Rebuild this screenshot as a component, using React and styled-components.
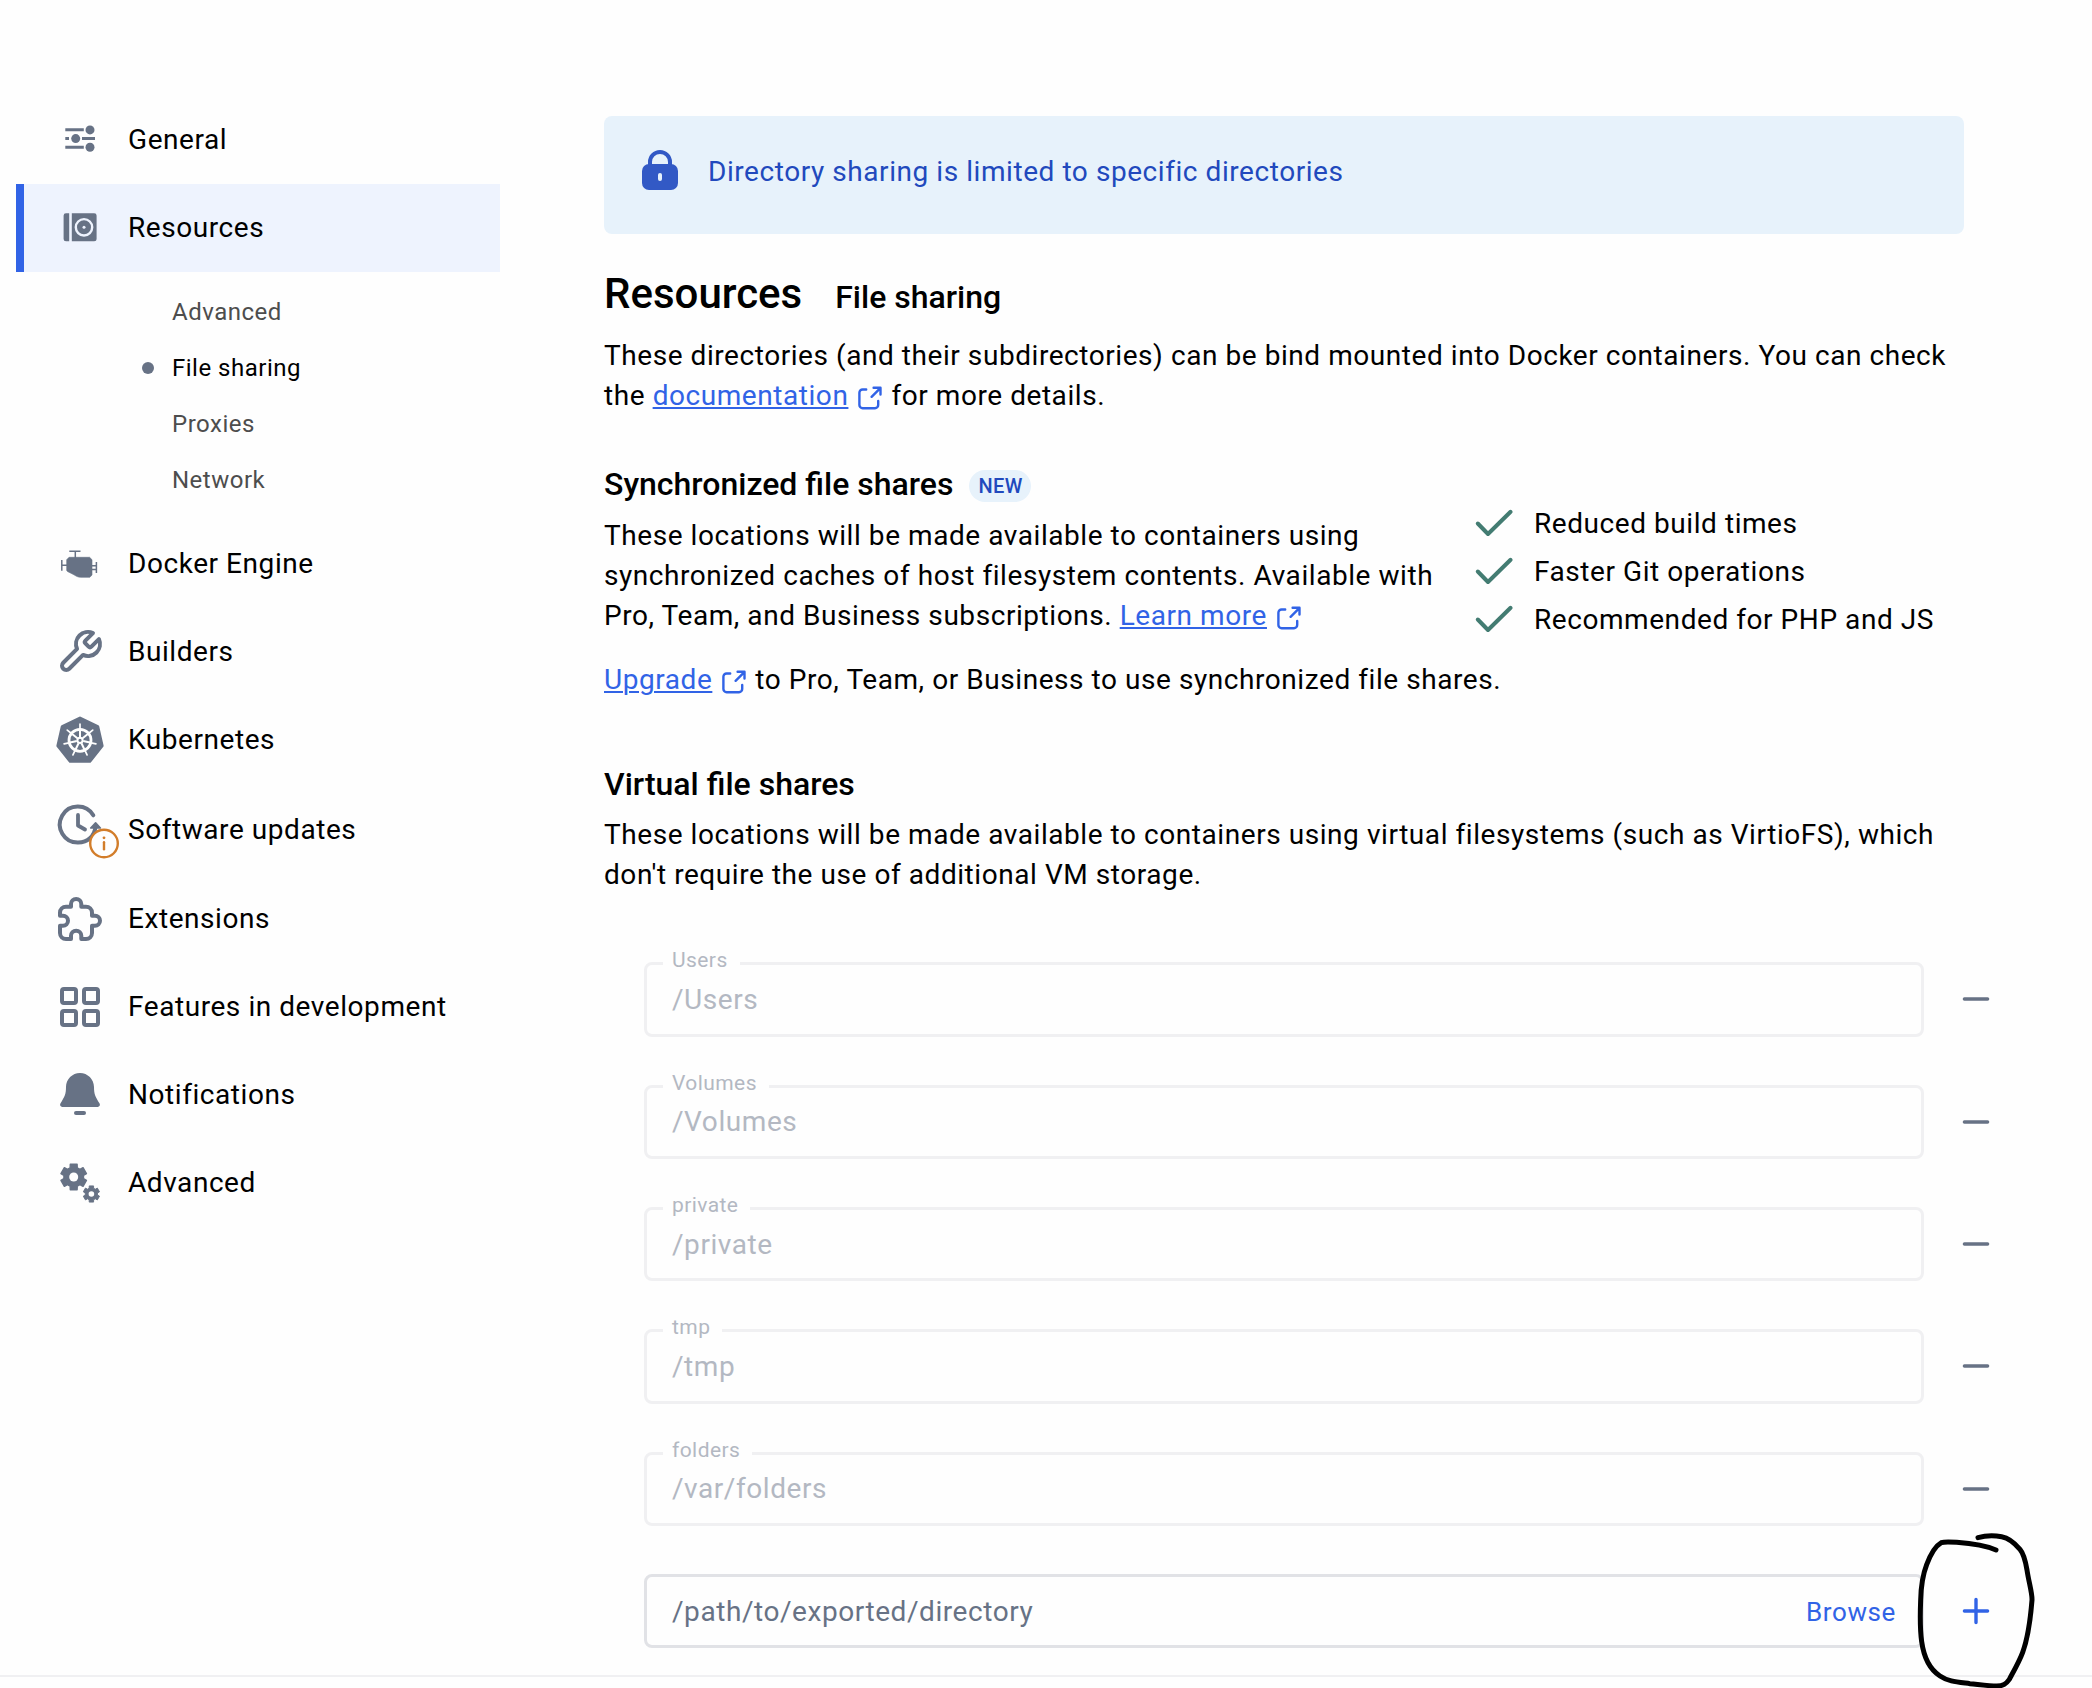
import React from "react";
import styled, { createGlobalStyle, css } from "styled-components";

const GREY = "#677285";
const BLUE = "#3163e6";
const ORANGE = "#d27d2a";
const GREEN = "#437c72";

const GlobalStyle = createGlobalStyle`
  * { box-sizing: border-box; }
  body {
    margin: 0;
    background: #fefefe;
    color: #000;
    font-family: Roboto, "Liberation Sans", sans-serif;
    font-size: 28px;
    line-height: 40px;
    letter-spacing: 0.56px;
  }
`;

const Page = styled.div`
  position: relative;
  width: 2092px;
  height: 1688px;
  overflow: hidden;
  display: flex;
  flex-direction: column;
`;

const Body = styled.div`
  display: flex;
  height: 1675px;
`;

const Footer = styled.footer`
  flex: none;
  height: 13px;
  border-top: 2px solid #f0f0f2;
`;

/* ---------- sidebar ---------- */

const Sidebar = styled.nav`
  width: 604px;
  flex: none;
  padding: 96px 104px 0 16px;
`;

const NavItem = styled.a`
  display: flex;
  align-items: center;
  gap: 24px;
  height: ${(p) => p.$height || 88}px;
  padding-left: 32px;
  border-left: 8px solid ${(p) => (p.$active ? BLUE : "transparent")};
  background: ${(p) => (p.$active ? "#eef3fe" : "transparent")};
  white-space: nowrap;
`;

const NavIcon = styled.svg`
  width: 48px;
  height: 48px;
  flex: none;
  overflow: visible;
  color: ${GREY};
`;

const SubList = styled.div`
  padding: 12px 0;
`;

const SubItem = styled.a`
  display: flex;
  align-items: center;
  height: 56px;
  padding-left: 126px;
  gap: 18px;
  font-size: 24px;
  letter-spacing: 0.5px;
  color: ${(p) => (p.$active ? "#000" : "#4d4d4d")};

  &::before {
    content: "";
    width: 12px;
    height: 12px;
    border-radius: 50%;
    background: ${(p) => (p.$active ? GREY : "transparent")};
  }
`;

/* ---------- content ---------- */

const Main = styled.main`
  width: 1488px;
  padding-top: 116px;
`;

const Alert = styled.div`
  display: flex;
  gap: 24px;
  width: 1360px;
  height: 118px;
  padding: 31px 32px;
  border-radius: 8px;
  background: #e7f2fb;
  color: #2149bd;
`;

const LockIcon = styled.svg`
  width: 48px;
  height: 48px;
`;

const AlertText = styled.div`
  padding-top: 5px;
`;

const TitleRow = styled.header`
  display: flex;
  align-items: baseline;
  gap: 33px;
  margin: 32px 0 14px;
  height: 56px;
`;

const Title = styled.h1`
  margin: 0;
  font-size: 42px;
  line-height: 56px;
  font-weight: 500;
  letter-spacing: 0;
`;

const Subtitle = styled.h2`
  margin: 0;
  font-size: 32px;
  line-height: 40px;
  font-weight: 500;
  letter-spacing: 0;
`;

const HeadingRow = styled.div`
  display: flex;
  align-items: center;
  gap: 16px;
  height: 40px;
  margin-bottom: ${(p) => p.$after}px;
`;

const Badge = styled.span`
  display: flex;
  align-items: center;
  height: 32px;
  margin-top: 4px;
  padding: 0 8px 0 9px;
  border-radius: 16px;
  background: #e7f2fb;
  color: #2149bd;
  font-size: 20px;
  font-weight: 500;
  letter-spacing: 0.4px;
`;

const Paragraph = styled.p`
  margin: 0 0 ${(p) => p.$after || 0}px;
  white-space: nowrap;
`;

const Link = styled.a`
  color: ${BLUE};
  text-decoration: underline;
  text-decoration-thickness: 2px;
  text-underline-offset: 2px;
`;

const ExternalSvg = styled.svg`
  width: 28px;
  height: 28px;
  margin: 0 7px 0 8px;
  vertical-align: -7px;
  color: ${BLUE};
`;

const SyncSection = styled.section`
  display: flex;
  width: 1360px;
  height: 172px;
  margin-bottom: 24px;
`;

const SyncText = styled.div`
  width: 866px;
`;

const Benefits = styled.ul`
  margin: 36px 0 0;
  padding: 0;
  list-style: none;
`;

const Benefit = styled.li`
  display: flex;
  align-items: center;
  gap: 16px;
  height: 48px;
  white-space: nowrap;
`;

const CheckSvg = styled.svg`
  width: 48px;
  height: 48px;
  flex: none;
`;

const ShareList = styled.div`
  display: flex;
  flex-direction: column;
  gap: 48px;
  padding-left: 40px;
`;

const ShareRow = styled.div`
  display: flex;
  align-items: center;
  gap: 28px;
  height: 74.33px;
`;

const Field = styled.div`
  position: relative;
  display: flex;
  align-items: center;
  justify-content: space-between;
  width: 1280px;
  height: 100%;
  padding: 1px 25px 0;
  border-radius: 8px;
  ${(p) =>
    p.$disabled
      ? css`
          border: 3px solid #f0f0f2;
          color: #b3b8c2;
        `
      : css`
          border: 3px solid #e1e2e6;
          color: ${GREY};
        `}
`;

const FieldLabel = styled.span`
  position: absolute;
  top: -21px;
  left: 16px;
  padding: 0 12px 0 9px;
  background: #fefefe;
  font-size: 21px;
  line-height: 32px;
  letter-spacing: 0.42px;
`;

const Browse = styled.button`
  padding: 0;
  border: 0;
  background: none;
  color: ${BLUE};
  font: inherit;
  font-size: 26px;
  letter-spacing: 0.6px;
`;

const RowButton = styled.button`
  display: flex;
  padding: 0;
  border: 0;
  background: none;
  color: ${(p) => (p.$primary ? BLUE : GREY)};
`;

const RowIcon = styled.svg`
  width: 48px;
  height: 48px;
`;

const Scribble = styled.svg`
  position: absolute;
  left: 1900px;
  top: 1520px;
  width: 160px;
  height: 168px;
  pointer-events: none;
`;

/* ---------- icons ---------- */

const polar = (cx, cy, r, deg) => {
  const a = (deg * Math.PI) / 180;
  return [cx + r * Math.sin(a), cy - r * Math.cos(a)];
};

const gearPoints = (cx, cy, outer, inner) => {
  const pts = [];
  for (let i = 0; i < 6; i++) {
    const a = i * 60;
    pts.push(polar(cx, cy, inner, a - 21));
    pts.push(polar(cx, cy, outer, a - 15));
    pts.push(polar(cx, cy, outer, a + 15));
    pts.push(polar(cx, cy, inner, a + 21));
  }
  return pts.map((p) => p.map((n) => n.toFixed(2)).join(",")).join(" ");
};

const SPOKES = [0, 1, 2, 3, 4, 5, 6].map((i) => (i * 360) / 7);
const HEPTAGON = SPOKES.map((a) => polar(24, 24.8, 22.7, a).join(",")).join(" ");

const icons = {
  general: (
    <g fill="currentColor" stroke="currentColor">
      <path d="M9.3 13.7H27.8M9.3 22.6H13M26 22.6H39M9.3 31.3H27.8" strokeWidth="3" />
      <g stroke="none">
        <circle cx="34" cy="13.9" r="4.5" />
        <circle cx="19.7" cy="22.6" r="4.5" />
        <circle cx="34" cy="31.3" r="4.5" />
      </g>
    </g>
  ),
  resources: (
    <>
      <path d="M10 9.3H13.2V37.3H10A2.4 2.4 0 0 1 7.6 34.9V11.7A2.4 2.4 0 0 1 10 9.3Z" fill="currentColor" />
      <path d="M15.8 9.3H38.2A2.4 2.4 0 0 1 40.6 11.7V34.9A2.4 2.4 0 0 1 38.2 37.3H15.8Z" fill="currentColor" />
      <circle cx="28" cy="23.3" r="8.2" fill="none" stroke="#eef3fe" strokeWidth="2.4" />
      <circle cx="28" cy="23.3" r="1.5" fill="#eef3fe" />
    </>
  ),
  engine: (
    <>
      <path
        d="M13 17.3H33.6L36 19.7V35L33.8 37.3H24.5C22 37.3 20 36 18 34.8L11.5 31.5L10.7 30.5V19.7Z"
        fill="currentColor"
        stroke="currentColor"
        strokeWidth="0.6"
        strokeLinejoin="round"
      />
      <path
        d="M13.3 11.2H24.5M19.3 11V18M5.8 20V30.8M5.8 25.2H11M40.4 22V33M36 25.8H40.4M36 29.6H40.4"
        fill="none"
        stroke="currentColor"
        strokeWidth="1.5"
      />
    </>
  ),
  builders: (
    <g transform="scale(2)">
      <path
        d="M14.7 6.3a1 1 0 0 0 0 1.4l1.6 1.6a1 1 0 0 0 1.4 0l3.77-3.77a6 6 0 0 1-7.94 7.94l-6.91 6.91a2.12 2.12 0 0 1-3-3l6.91-6.91a6 6 0 0 1 7.94-7.94l-3.76 3.76z"
        fill="none"
        stroke="currentColor"
        strokeWidth="2"
        strokeLinecap="round"
        strokeLinejoin="round"
      />
    </g>
  ),
  kubernetes: (
    <>
      <polygon points={HEPTAGON} fill="currentColor" stroke="currentColor" strokeWidth="3" strokeLinejoin="round" />
      <g stroke="#fefefe" fill="none">
        <circle cx="24" cy="24.3" r="11" strokeWidth="2.8" />
        {SPOKES.map((a) => (
          <g key={a} transform={`rotate(${a} 24 24.3)`}>
            <path d="M24 21V13" strokeWidth="2" />
            <path d="M24 13V8" strokeWidth="1.7" strokeLinecap="round" />
          </g>
        ))}
        <circle cx="24" cy="24.3" r="2.6" strokeWidth="2" />
      </g>
    </>
  ),
  updates: (
    <>
      <path
        d="M37.3 9.8A18 18 0 1 0 22 37C32 37 38.5 30.5 39.6 21"
        fill="none"
        stroke="currentColor"
        strokeWidth="4"
        strokeLinecap="round"
      />
      <path d="M34.7 22.5L39.6 17.3L44.4 22.5Z" fill="currentColor" stroke="currentColor" strokeWidth="1.6" strokeLinejoin="round" />
      <path d="M22 9.5V20L29 24" fill="none" stroke="currentColor" strokeWidth="3.8" strokeLinecap="round" strokeLinejoin="round" />
      <circle cx="48" cy="38" r="13.8" fill="#fefefe" stroke={ORANGE} strokeWidth="2.4" />
      <path d="M48 36.8V43.8" stroke={ORANGE} strokeWidth="2.4" strokeLinecap="round" />
      <circle cx="48" cy="32.3" r="1.4" fill={ORANGE} />
    </>
  ),
  extensions: (
    <path
      d="M4 21.7V18.7A6 6 0 0 1 10 12.7H15V10.1A5.15 5.15 0 0 1 25.3 10.1V12.7H30A6 6 0 0 1 36 18.7V21.7H39A5 5 0 0 1 39 31.7H36V39A6 6 0 0 1 30 45H25.3V41.8A5.15 5.15 0 0 0 15 41.8V45H10A6 6 0 0 1 4 39V31.7H7A5 5 0 0 0 7 21.7Z"
      fill="none"
      stroke="currentColor"
      strokeWidth="4"
      strokeLinejoin="round"
    />
  ),
  features: (
    <g fill="none" stroke="currentColor" strokeWidth="4">
      <rect x="6" y="7" width="14" height="14" rx="2" />
      <rect x="28" y="7" width="14" height="14" rx="2" />
      <rect x="6" y="29" width="14" height="14" rx="2" />
      <rect x="28" y="29" width="14" height="14" rx="2" />
    </g>
  ),
  notifications: (
    <g fill="currentColor">
      <path d="M24 3C31.7 3 38 9.3 38 17C38 24.5 39.4 26.5 43.6 33.6C44.5 35.3 43.5 37 41.7 37H6.3C4.5 37 3.5 35.3 4.4 33.6C8.6 26.5 10 24.5 10 17C10 9.3 16.3 3 24 3Z" />
      <rect x="18" y="41" width="12" height="4" rx="2" />
    </g>
  ),
  advanced: (
    <>
      <g fill="currentColor" stroke="currentColor" strokeLinejoin="round">
        <polygon points={gearPoints(17.7, 19, 13.2, 9.9)} strokeWidth="1.4" />
        <polygon points={gearPoints(35.4, 36, 8.4, 6.2)} strokeWidth="0.9" />
      </g>
      <circle cx="17.7" cy="19" r="4.5" fill="#fefefe" />
      <circle cx="35.4" cy="36" r="2.8" fill="#fefefe" />
    </>
  ),
};

const External = () => (
  <ExternalSvg viewBox="0 0 28 28" fill="none" stroke="currentColor" strokeWidth="2.4" strokeLinecap="round" strokeLinejoin="round">
    <path d="M10.2 5.5H6.6A3.2 3.2 0 0 0 3.4 8.7V21A3.2 3.2 0 0 0 6.6 24.2H19A3.2 3.2 0 0 0 22.2 21V17" />
    <path d="M15.6 12.8L24.3 4.1M17.6 3.8H24.5V10.6" />
  </ExternalSvg>
);

const Check = () => (
  <CheckSvg viewBox="0 0 48 48" fill="none" stroke={GREEN} strokeWidth="4" strokeLinecap="round" strokeLinejoin="round">
    <path d="M7.8 23.5L18 34L40.6 11.8" />
  </CheckSvg>
);

/* ---------- data ---------- */

const navTop = [
  { id: "general", label: "General" },
  { id: "resources", label: "Resources", active: true },
];

const navSub = ["Advanced", "File sharing", "Proxies", "Network"];

const navBottom = [
  { id: "engine", label: "Docker Engine" },
  { id: "builders", label: "Builders" },
  { id: "kubernetes", label: "Kubernetes" },
  { id: "updates", label: "Software updates", height: 91, lift: 0.5 },
  { id: "extensions", label: "Extensions", lift: 1 },
  { id: "features", label: "Features in development", lift: 1 },
  { id: "notifications", label: "Notifications", lift: 1 },
  { id: "advanced", label: "Advanced", lift: 1 },
];

const benefits = ["Reduced build times", "Faster Git operations", "Recommended for PHP and JS"];

const shares = [
  { label: "Users", path: "/Users" },
  { label: "Volumes", path: "/Volumes" },
  { label: "private", path: "/private" },
  { label: "tmp", path: "/tmp" },
  { label: "folders", path: "/var/folders" },
];

const NavEntry = ({ item }) => (
  <NavItem $active={item.active} $height={item.height}>
    <NavIcon viewBox={`0 ${item.lift || 0} 48 48`}>{icons[item.id]}</NavIcon>
    {item.label}
  </NavItem>
);

export default function App() {
  return (
    <Page>
      <GlobalStyle />
      <Body>
        <Sidebar>
          {navTop.map((item) => (
            <NavEntry key={item.id} item={item} />
          ))}
          <SubList>
            {navSub.map((label) => (
              <SubItem key={label} $active={label === "File sharing"}>
                {label}
              </SubItem>
            ))}
          </SubList>
          {navBottom.map((item) => (
            <NavEntry key={item.id} item={item} />
          ))}
        </Sidebar>

        <Main>
          <Alert>
            <LockIcon viewBox="0 0 48 48">
              <path d="M14 20V15A10 10 0 0 1 34 15V20" fill="none" stroke="#3259c5" strokeWidth="4" />
              <rect x="6" y="17" width="36" height="26" rx="7" fill="#3259c5" />
              <rect x="22" y="26" width="4" height="8" rx="2" fill="#e7f2fb" />
            </LockIcon>
            <AlertText>Directory sharing is limited to specific directories</AlertText>
          </Alert>

          <TitleRow>
            <Title>Resources</Title>
            <Subtitle>File sharing</Subtitle>
          </TitleRow>
          <Paragraph $after={48}>
            These directories (and their subdirectories) can be bind mounted into Docker containers. You can check
            <br />
            the <Link>documentation</Link>
            <External />
            for more details.
          </Paragraph>

          <SyncSection>
            <SyncText>
              <HeadingRow $after={12}>
                <Subtitle>Synchronized file shares</Subtitle>
                <Badge>NEW</Badge>
              </HeadingRow>
              <Paragraph>
                These locations will be made available to containers using
                <br />
                synchronized caches of host filesystem contents. Available with
                <br />
                Pro, Team, and Business subscriptions. <Link>Learn more</Link>
                <External />
              </Paragraph>
            </SyncText>
            <Benefits>
              {benefits.map((b) => (
                <Benefit key={b}>
                  <Check />
                  {b}
                </Benefit>
              ))}
            </Benefits>
          </SyncSection>
          <Paragraph $after={64}>
            <Link>Upgrade</Link>
            <External />
            to Pro, Team, or Business to use synchronized file shares.
          </Paragraph>

          <HeadingRow $after={11}>
            <Subtitle>Virtual file shares</Subtitle>
          </HeadingRow>
          <Paragraph $after={67.3}>
            These locations will be made available to containers using virtual filesystems (such as VirtioFS), which
            <br />
            don't require the use of additional VM storage.
          </Paragraph>

          <ShareList>
            {shares.map((s) => (
              <ShareRow key={s.path}>
                <Field $disabled>
                  <FieldLabel>{s.label}</FieldLabel>
                  {s.path}
                </Field>
                <RowButton>
                  <RowIcon viewBox="0 0 48 48" fill="none" stroke="currentColor" strokeWidth="3.4" strokeLinecap="round">
                    <path d="M12.4 24H35.6" />
                  </RowIcon>
                </RowButton>
              </ShareRow>
            ))}
            <ShareRow>
              <Field>
                /path/to/exported/directory
                <Browse>Browse</Browse>
              </Field>
              <RowButton $primary>
                <RowIcon viewBox="0 0 48 48" fill="none" stroke="currentColor" strokeWidth="3.4" strokeLinecap="round">
                  <path d="M12.4 24H35.6M24 12.4V35.6" />
                </RowIcon>
              </RowButton>
            </ShareRow>
          </ShareList>
        </Main>
      </Body>
      <Footer />

      <Scribble viewBox="480 360 480 504" fill="none" stroke="#000" strokeWidth="15" strokeLinecap="round" strokeLinejoin="round">
        <path d="M768 450C740 438 690 430 650 427C625 425 612 425 604 428C590 436 572 462 560 494C548 525 543 560 542 600C540 650 540 690 545 725C552 775 572 810 600 828C625 845 650 846 690 851C720 854 750 858 770 858C790 858 798 852 808 838C822 812 838 784 848 757C866 708 872 650 876 600C877 580 866 545 861 510C856 480 852 462 840 448C825 430 808 414 785 410C760 406 735 407 714 413" />
      </Scribble>
    </Page>
  );
}
